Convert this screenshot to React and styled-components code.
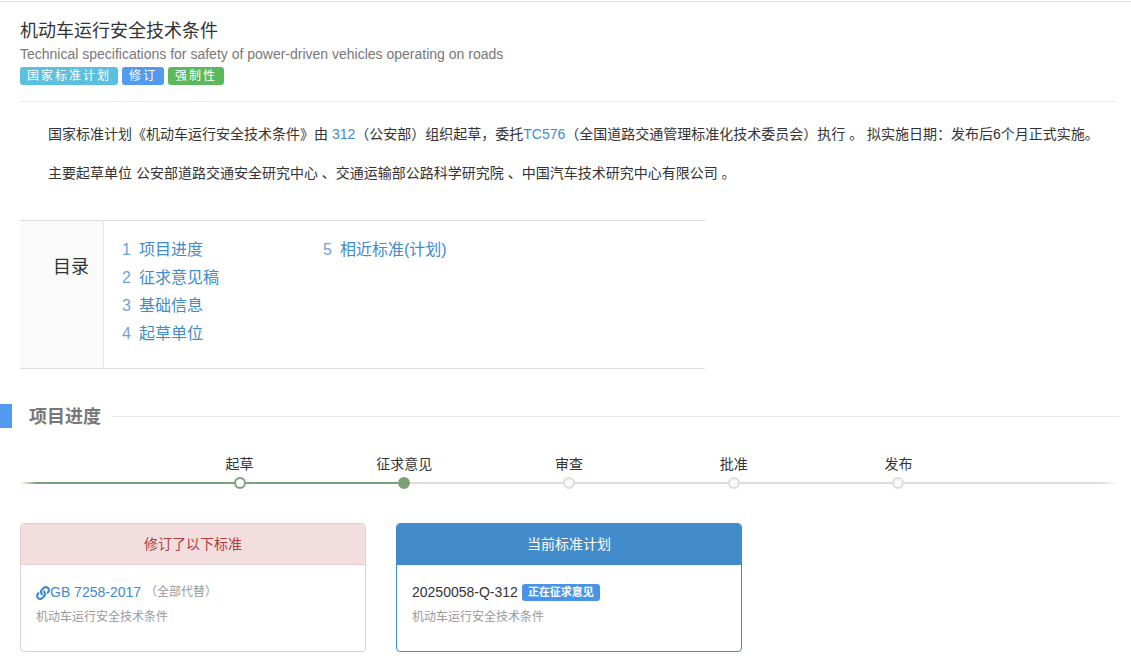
import React from 'react'
import styled, { createGlobalStyle } from 'styled-components'
import { FaLink } from 'react-icons/fa'

const linkBlue = '#428bca'
const brandBlue = '#519aed'
const green = '#7ba177'
const greyLine = '#dddddd'

const GlobalStyle = createGlobalStyle`
    * {
        box-sizing: border-box;
    }
    body {
        margin: 0;
        background: #ffffff;
        color: #333333;
        font-family: 'Liberation Sans', 'Noto Sans CJK SC', sans-serif;
        font-size: 14px;
        line-height: 20px;
    }
    a {
        color: ${linkBlue};
        text-decoration: none;
    }
    a:hover {
        text-decoration: underline;
    }
`

const Page = styled.main`
    padding: 1px 0 11px;
`

const Header = styled.header`
    border-top: 1px solid #e3e3e3;
    padding: 17px 15px 0 20px;
`

const Title = styled.h1`
    margin: 0;
    font-size: 18px;
    font-weight: 400;
    line-height: 24px;
`

const Subtitle = styled.p`
    margin: 0 0 2px;
    color: #777777;
    line-height: 22px;
`

const Tags = styled.div`
    display: flex;
    gap: 4px;
    padding-bottom: 16px;
    border-bottom: 1px solid #eeeeee;
`

const Tag = styled.span`
    padding: 0 7px;
    border-radius: 3px;
    background: ${({ $color }) => $color};
    color: #ffffff;
    font-size: 12px;
    letter-spacing: 2px;
    line-height: 18px;
`

const Intro = styled.section`
    padding: 13px 20px 27px 48px;
    line-height: 39px;

    p {
        margin: 0;
    }
`

const Toc = styled.nav`
    display: flex;
    width: calc((100% - 35px) * 0.625);
    margin: 0 0 35px 20px;
    border-top: 1px solid ${greyLine};
    border-bottom: 1px solid ${greyLine};
`

const TocTitle = styled.h2`
    flex: none;
    width: 84px;
    margin: 0;
    padding: 34px 14px 0 0;
    border-right: 1px solid #e6e6e6;
    background: #fafafa;
    font-size: 18px;
    font-weight: 400;
    line-height: 24px;
    text-align: right;
`

const TocList = styled.ol`
    display: grid;
    grid-auto-flow: column;
    grid-auto-columns: 201px;
    grid-template-rows: repeat(4, 28px);
    margin: 0;
    padding: 15px 0 20px 18px;
    list-style: none;
    font-size: 16px;
    line-height: 28px;
`

const TocLink = styled.a`
    display: flex;
    gap: 8px;
`

const TocNumber = styled.span`
    color: #6f9fdb;
`

const SectionHeading = styled.div`
    display: flex;
    align-items: center;
    padding-right: 12px;

    &::before {
        content: '';
        width: 12px;
        height: 24px;
        background: ${brandBlue};
    }
    &::after {
        content: '';
        flex: 1;
        height: 1px;
        background: #e8e8e8;
    }
`

const SectionTitle = styled.h2`
    margin: 0 11px 0 17px;
    padding-top: 2px;
    color: #777777;
    font-size: 18px;
    line-height: 22px;
`

const Steps = styled.ol`
    display: grid;
    grid-template-columns: 12.5fr repeat(5, 15fr) 12.5fr;
    margin: 0;
    padding: 26px 13px 34px 20px;
    list-style: none;
`

const Step = styled.li`
    display: flex;
    flex-direction: column;
    align-items: center;
`

const StepTrack = styled.div`
    display: flex;
    align-items: center;
    align-self: stretch;
    height: 12px;
    margin-top: 3px;

    &::before,
    &::after {
        content: '';
        flex: 1;
        height: 2px;
        background: ${({ $before }) => ($before ? green : greyLine)};
    }
    &::after {
        background: ${({ $after }) => ($after ? green : greyLine)};
    }
`

const StepDot = styled.span`
    width: 12px;
    height: 12px;
    border: 2px solid ${({ $state }) => ($state === 'todo' ? greyLine : green)};
    border-radius: 50%;
    background: ${({ $state }) => ($state === 'current' ? green : '#f9f9f9')};
`

const StepEnd = styled.li`
    align-self: end;
    height: 2px;
    margin-bottom: 5px;
    background: linear-gradient(
        to ${({ $side }) => $side},
        ${({ $color }) => $color} 88%,
        transparent
    );
`

const Cards = styled.div`
    display: grid;
    grid-template-columns: repeat(3, 1fr);
    gap: 30px;
    padding: 0 13px 0 20px;
`

const Card = styled.article`
    overflow: hidden;
    border: 1px solid ${({ $primary }) => ($primary ? linkBlue : '#e0cdd2')};
    border-radius: 4px;
`

const CardTitle = styled.h3`
    margin: 0;
    padding: 10px 15px;
    border-bottom: 1px solid ${({ $primary }) => ($primary ? linkBlue : '#e8cfd4')};
    background: ${({ $primary }) => ($primary ? linkBlue : '#f2dede')};
    color: ${({ $primary }) => ($primary ? '#ffffff' : '#b0413f')};
    font-size: 14px;
    font-weight: 400;
    text-align: center;
`

const CardBody = styled.div`
    padding: 15px 15px 21px;
`

const CardLine = styled.div`
    display: flex;
    align-items: center;
    gap: 4px;
    line-height: 25px;

    a {
        display: flex;
        align-items: center;
    }
`

const Note = styled.small`
    color: #999999;
    font-size: 12px;
`

const CardText = styled.p`
    margin: 0;
    color: #999999;
    font-size: 12px;
    line-height: 25px;
`

const Status = styled.span`
    padding: 0 6px;
    border-radius: 3px;
    background: #4a94e8;
    color: #ffffff;
    font-size: 11px;
    font-weight: 700;
    line-height: 17px;
`

const tags = [
  { name: '国家标准计划', color: '#5bc0de' },
  { name: '修订', color: brandBlue },
  { name: '强制性', color: '#5cb85c' },
]

const contents = ['项目进度', '征求意见稿', '基础信息', '起草单位', '相近标准(计划)']

const steps = ['起草', '征求意见', '审查', '批准', '发布']
const currentStep = 1

const stepState = (index) => {
  if (index === currentStep) return 'current'
  return index < currentStep ? 'done' : 'todo'
}

const App = () => {
  return (
    <Page>
        <GlobalStyle />
        <Header>
            <Title>机动车运行安全技术条件</Title>
            <Subtitle>Technical specifications for safety of power-driven vehicles operating on roads</Subtitle>
            <Tags>
                {tags.map(({ name, color }) => (
                    <Tag key={name} $color={color}>{name}</Tag>
                ))}
            </Tags>
        </Header>
        <Intro>
            <p>
                国家标准计划《机动车运行安全技术条件》由 <a href="#312">312</a>（公安部）组织起草，委托<a href="#tc576">TC576</a>（全国道路交通管理标准化技术委员会）执行 。 拟实施日期：发布后6个月正式实施。
            </p>
            <p>
                主要起草单位 公安部道路交通安全研究中心 、交通运输部公路科学研究院 、中国汽车技术研究中心有限公司 。
            </p>
        </Intro>
        <Toc aria-label="目录">
            <TocTitle>目录</TocTitle>
            <TocList>
                {contents.map((name, index) => (
                    <li key={name}>
                        <TocLink href={`#section-${index + 1}`}>
                            <TocNumber>{index + 1}</TocNumber>
                            {name}
                        </TocLink>
                    </li>
                ))}
            </TocList>
        </Toc>
        <section id="section-1">
            <SectionHeading>
                <SectionTitle>项目进度</SectionTitle>
            </SectionHeading>
            <Steps>
                <StepEnd $side="left" $color={green} aria-hidden="true" />
                {steps.map((name, index) => (
                    <Step key={name} aria-current={index === currentStep ? 'step' : undefined}>
                        {name}
                        <StepTrack $before={index <= currentStep} $after={index < currentStep}>
                            <StepDot $state={stepState(index)} />
                        </StepTrack>
                    </Step>
                ))}
                <StepEnd $side="right" $color={greyLine} aria-hidden="true" />
            </Steps>
            <Cards>
                <Card>
                    <CardTitle>修订了以下标准</CardTitle>
                    <CardBody>
                        <CardLine>
                            <a href="#gb-7258-2017"><FaLink size={14} aria-hidden="true" />GB 7258-2017</a>
                            <Note>（全部代替）</Note>
                        </CardLine>
                        <CardText>机动车运行安全技术条件</CardText>
                    </CardBody>
                </Card>
                <Card $primary>
                    <CardTitle $primary>当前标准计划</CardTitle>
                    <CardBody>
                        <CardLine>
                            20250058-Q-312
                            <Status>正在征求意见</Status>
                        </CardLine>
                        <CardText>机动车运行安全技术条件</CardText>
                    </CardBody>
                </Card>
            </Cards>
        </section>
    </Page>
  )
}

export default App
